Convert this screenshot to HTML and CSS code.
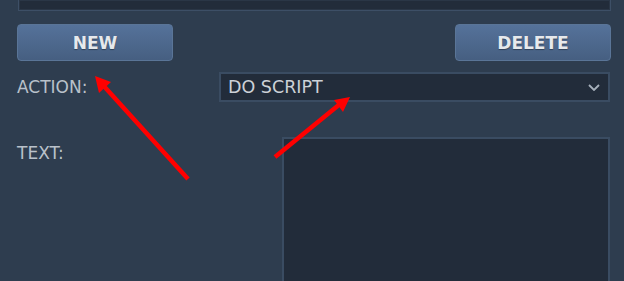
FILE: index.html
```html
<!DOCTYPE html>
<html lang="en">
<head>
    <meta charset="UTF-8">
    <meta name="viewport" content="width=device-width, initial-scale=1.0">
    <title>Trigger Editor</title>
    <link rel="stylesheet" href="styles.css">
</head>
<body>
    <div class="panel">
        <div class="list-box"></div>

        <div class="button-row">
            <button class="action-button">NEW</button>
            <button class="action-button">DELETE</button>
        </div>

        <div class="field action-field">
            <label for="action">ACTION:</label>
            <div class="select-box" id="action">
                <span>DO SCRIPT</span>
                <svg class="chevron" width="12" height="7" viewBox="0 0 12 7">
                    <path d="M1 1 L6 6 L11 1" fill="none" stroke="#a7b1bc" stroke-width="1.8"/>
                </svg>
            </div>
        </div>

        <div class="field text-field">
            <label for="scriptText">TEXT:</label>
            <div class="text-box" id="scriptText"></div>
        </div>
    </div>

    <!-- annotation arrows -->
    <svg class="arrows" width="624" height="281" viewBox="0 0 624 281">
        <line x1="188" y1="179" x2="102" y2="84" stroke="#ff0000" stroke-width="4.5"/>
        <polygon points="95,76 111,82 99,93" fill="#ff0000"/>
        <line x1="275" y1="157" x2="340" y2="104" stroke="#ff0000" stroke-width="4.5"/>
        <polygon points="350,97 334,100 343,112" fill="#ff0000"/>
    </svg>
</body>
</html>
```

FILE: styles.css
```css
body {
    font-family: 'DejaVu Sans', Verdana, sans-serif;
    background-color: #2e3d4f;
    color: #b9c1ca;
    margin: 0;
    overflow: hidden;
}
.panel {
    padding: 0 14px 0 17px;
}
.list-box {
    height: 10px;
    margin-left: 1px;
    margin-right: -1px;
    background-color: #222c3a;
    border: 1px solid #3d4f66;
    border-top: none;
    box-shadow: inset 0 0 0 1px #2a3646;
}
.button-row {
    display: flex;
    justify-content: space-between;
    margin-top: 13px;
    margin-right: -1px;
}
.action-button {
    width: 156px;
    height: 37px;
    font-family: 'DejaVu Sans', Verdana, sans-serif;
    font-weight: bold;
    font-size: 17px;
    color: #e6e9ec;
    background: linear-gradient(#55729a, #465f81);
    border: 1px solid #5a7597;
    border-radius: 4px;
    text-shadow: 0 1px 1px rgba(0, 0, 0, 0.35);
    padding: 0;
    cursor: pointer;
}
.field {
    display: grid;
}
.action-field {
    grid-template-columns: 202px 1fr;
    align-items: center;
    margin-top: 11px;
}
.action-field label {
    font-size: 17px;
}
.select-box {
    height: 26px;
    border: 2px solid #3a4c62;
    background-color: #222c3a;
    color: #ccd1d7;
    font-size: 17.5px;
    display: flex;
    align-items: center;
    justify-content: space-between;
    padding: 0 7px;
}
.chevron {
    margin-right: 1px;
}
.text-field {
    grid-template-columns: 265px 1fr;
    margin-top: 35px;
}
.text-field label {
    font-size: 17px;
    line-height: 20px;
    margin-top: 6px;
}
.text-box {
    height: 150px;
    border: 2px solid #3a4c62;
    border-bottom: none;
    background-color: #222c3a;
}
.arrows {
    position: absolute;
    left: 0;
    top: 0;
    pointer-events: none;
}
```
